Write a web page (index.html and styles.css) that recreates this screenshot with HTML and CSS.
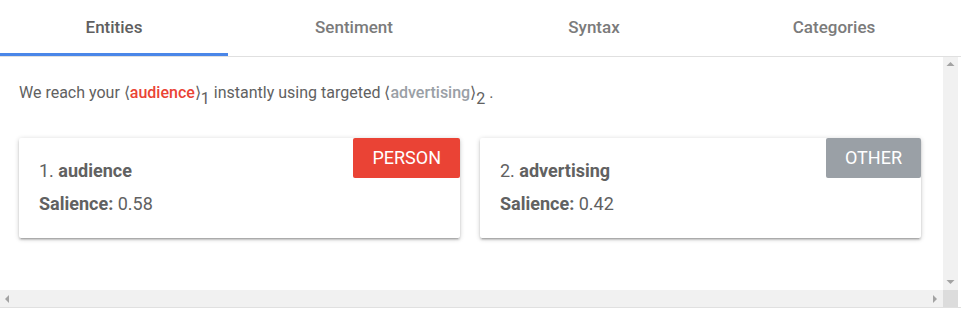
FILE: index.html
```html
<!DOCTYPE html>
<html lang="en">
<head>
    <meta charset="UTF-8">
    <title>Natural Language - Entities</title>
    <link rel="stylesheet" href="styles.css">
</head>
<body>
    <div class="tabs">
        <div class="tab active">Entities</div>
        <div class="tab">Sentiment</div>
        <div class="tab">Syntax</div>
        <div class="tab">Categories</div>
    </div>

    <div class="panel-wrap">
        <div class="panel">
            <div class="content">
                <p class="sentence">
                    We reach your <span class="bracket">&#10216;<span class="ent ent-person">audience</span>&#10217;</span><sub>1</sub>
                    instantly using targeted <span class="bracket">&#10216;<span class="ent ent-other">advertising</span>&#10217;</span><sub>2</sub> .
                </p>

                <div class="cards">
                    <div class="card">
                        <span class="badge badge-person">PERSON</span>
                        <div class="card-title">1. <b>audience</b></div>
                        <div class="card-row"><b>Salience:</b> 0.58</div>
                    </div>
                    <div class="card">
                        <span class="badge badge-other">OTHER</span>
                        <div class="card-title">2. <b>advertising</b></div>
                        <div class="card-row"><b>Salience:</b> 0.42</div>
                    </div>
                </div>
            </div>

            <div class="vscroll">
                <svg class="arrow" width="15" height="15" viewBox="0 0 15 15"><polygon points="3.5,9 11.5,9 7.5,5" fill="#a3a3a3"/></svg>
                <svg class="arrow" width="15" height="15" viewBox="0 0 15 15"><polygon points="3.5,5 11.5,5 7.5,9" fill="#a3a3a3"/></svg>
            </div>
            <div class="hscroll">
                <svg class="arrow" width="15" height="16" viewBox="0 0 15 16"><polygon points="9,4 9,12 5,8" fill="#a3a3a3"/></svg>
                <svg class="arrow" width="15" height="16" viewBox="0 0 15 16"><polygon points="5,4 5,12 9,8" fill="#a3a3a3"/></svg>
            </div>
            <div class="corner"></div>
        </div>
    </div>
</body>
</html>
```

FILE: styles.css
```css
body {
    font-family: Roboto, "Liberation Sans", sans-serif;
    margin: 0;
    padding: 0;
    color: #616161;
    background: #fff;
}
.tabs {
    display: grid;
    grid-template-columns: repeat(4, 228px);
    column-gap: 12px;
    height: 56px;
    border-bottom: 1px solid #e0e0e0;
}
.tab {
    display: flex;
    align-items: center;
    justify-content: center;
    font-size: 17px;
    font-weight: 500;
    color: #7b7b7b;
    padding-bottom: 3px;
    box-sizing: border-box;
}
.tab.active {
    color: #5f5f5f;
    border-bottom: 3px solid #4a86e8;
    padding-bottom: 0;
}
.panel-wrap {
    border-bottom: 1px solid #e0e0e0;
}
.panel {
    width: 958px;
    display: grid;
    grid-template-columns: 943px 15px;
    grid-template-rows: 233px 17px;
}
.content {
    overflow: hidden;
    padding: 0 22px 0 19px;
}

/* drawn scrollbars */
.vscroll,
.hscroll {
    background: #f1f1f1;
    display: flex;
    justify-content: space-between;
}
.vscroll {
    flex-direction: column;
}
.hscroll {
    align-items: center;
}
.corner {
    background: #dcdcdc;
}
.arrow {
    display: block;
}

.sentence {
    margin: 24px 0 0 0;
    font-size: 16px;
    line-height: 24px;
    color: #616161;
}
.sentence sub {
    font-size: 16px;
    vertical-align: -6px;
    line-height: 0;
}
.ent {
    font-weight: 500;
}
.ent-person {
    color: #ea4335;
}
.ent-other {
    color: #9aa0a6;
}
.cards {
    display: grid;
    grid-template-columns: 1fr 1fr;
    column-gap: 20px;
    margin-top: 33px;
    padding-bottom: 8px;
}
.card {
    position: relative;
    height: 100px;
    box-sizing: border-box;
    padding: 21px 20px 0 20px;
    border-radius: 2px;
    background: #fff;
    box-shadow: 0 2px 2px 0 rgba(0,0,0,.14), 0 3px 1px -2px rgba(0,0,0,.12), 0 1px 5px 0 rgba(0,0,0,.2);
}
.card-title {
    font-size: 18px;
    line-height: 24px;
}
.card-row {
    font-size: 18px;
    line-height: 24px;
    margin-top: 9px;
}
.card b {
    font-weight: 700;
}
.badge {
    position: absolute;
    top: 0;
    right: 0;
    height: 40px;
    line-height: 40px;
    padding: 0 19px;
    color: #fff;
    font-size: 18px;
    border-radius: 2px;
}
.badge-person {
    background: #ea4335;
}
.badge-other {
    background: #9aa0a6;
}
```
